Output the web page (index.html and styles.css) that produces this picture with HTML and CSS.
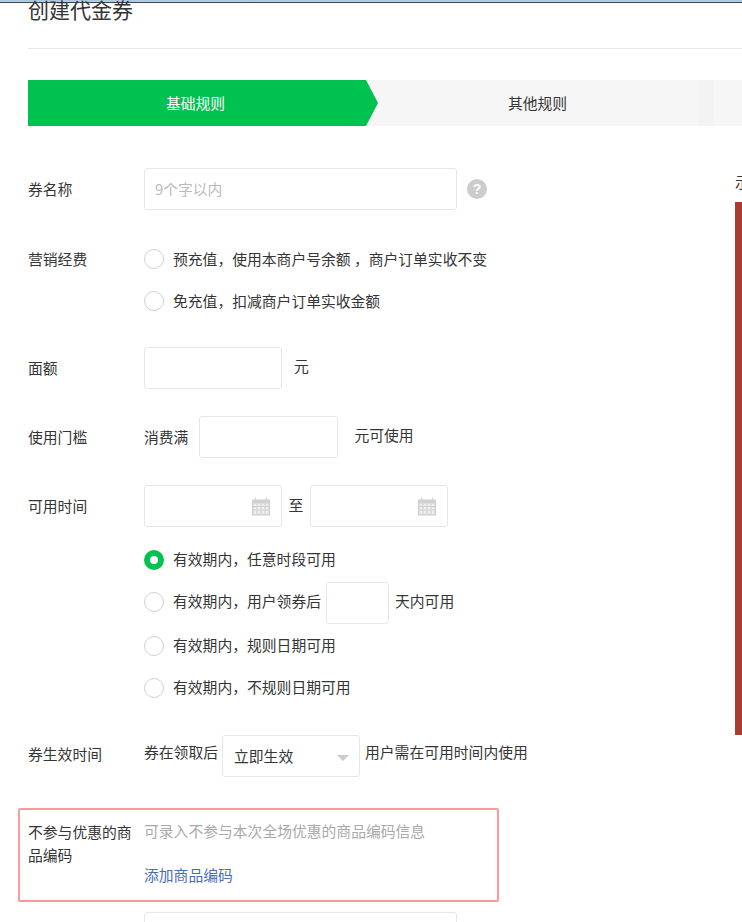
FILE: index.html
```html
<!DOCTYPE html>
<html lang="zh-CN">
<head>
<meta charset="utf-8">
<title>创建代金券</title>
<link rel="stylesheet" href="styles.css">
</head>
<body>
<div class="browser-strip"></div>
<div class="page">
  <main class="main">
    <h1 class="title">创建代金券</h1>
    <div class="steps">
      <div class="step step-active">基础规则</div>
      <div class="step step-next">其他规则</div>
      <div class="step-rest"></div>
    </div>
    <div class="content">
      <form class="form">
        <div class="row row-name">
          <div class="label">券名称</div>
          <div class="field"><input class="input input-wide" placeholder="9个字以内">
            <span class="help">?</span></div>
        </div>
        <div class="row row-budget">
          <div class="label">营销经费</div>
          <div class="stack">
            <label class="radio-row"><span class="radio"></span>预充值，使用本商户号余额 ，商户订单实收不变</label>
            <label class="radio-row"><span class="radio"></span>免充值，扣减商户订单实收金额</label>
          </div>
        </div>
        <div class="row row-face">
          <div class="label">面额</div>
          <div class="field"><input class="input input-mid"><span class="unit">元</span></div>
        </div>
        <div class="row row-gap">
          <div class="label">使用门槛</div>
          <div class="field"><span class="prefix">消费满</span><input class="input input-threshold"><span class="unit-far">元可使用</span></div>
        </div>
        <div class="row row-gap row-top">
          <div class="label label-date">可用时间</div>
          <div class="stack">
            <div class="field">
              <div class="date">
                <svg class="cal" viewBox="0 0 18 18"><path d="M0 2h3V0h1v2h10V0h1v2h3v16H0z" fill="#d0d0d0"/><path d="M1.500 6h3v2.500h-3zM5.500 6h3v2.500h-3zM9.500 6h3v2.500h-3zM13.500 6h3v2.500h-3zM1.500 9.500h3V12h-3zM5.500 9.500h3V12h-3zM9.500 9.500h3V12h-3zM13.500 9.500h3V12h-3zM1.500 13h3v3.500h-3zM5.500 13h3v3.500h-3zM9.500 13h3v3.500h-3zM13.500 13h3v3.500h-3z" fill="#eee"/></svg>
              </div>
              <span class="to">至</span>
              <div class="date">
                <svg class="cal" viewBox="0 0 18 18"><path d="M0 2h3V0h1v2h10V0h1v2h3v16H0z" fill="#d0d0d0"/><path d="M1.500 6h3v2.500h-3zM5.500 6h3v2.500h-3zM9.500 6h3v2.500h-3zM13.500 6h3v2.500h-3zM1.500 9.500h3V12h-3zM5.500 9.500h3V12h-3zM9.500 9.500h3V12h-3zM13.500 9.500h3V12h-3zM1.500 13h3v3.500h-3zM5.500 13h3v3.500h-3zM9.500 13h3v3.500h-3zM13.500 13h3v3.500h-3z" fill="#eee"/></svg>
              </div>
            </div>
            <div class="period">
              <label class="radio-row"><span class="radio radio-on"></span>有效期内，任意时段可用</label>
              <label class="radio-row radio-row-days"><span class="radio"></span>有效期内，用户领券后<input class="input input-days"><span class="days-text">天内可用</span></label>
              <label class="radio-row radio-row-rule"><span class="radio"></span>有效期内，规则日期可用</label>
              <label class="radio-row"><span class="radio"></span>有效期内，不规则日期可用</label>
            </div>
          </div>
        </div>
        <div class="row row-effect">
          <div class="label">券生效时间</div>
          <div class="field">券在领取后
            <div class="select">立即生效<span class="caret"></span></div>
            <span class="after-select">用户需在可用时间内使用</span>
          </div>
        </div>
        <div class="highlight">
          <div class="label label-multi">不参与优惠的商品编码</div>
          <div class="hl-body">
            <p class="hint">可录入不参与本次全场优惠的商品编码信息</p>
            <a class="link" href="#">添加商品编码</a>
          </div>
        </div>
        <div class="row row-last">
          <div class="label"></div>
          <input class="input input-wide">
        </div>
      </form>
      <aside class="preview">
        <div class="preview-title">示例</div>
        <div class="preview-panel"></div>
      </aside>
    </div>
  </main>
</div>
</body>
</html>
```
FILE: styles.css
```css
* { box-sizing: border-box; }
html, body { margin: 0; height: 922px; overflow: hidden; background: #fff; }
body { font-family: "Noto Sans CJK SC", "Noto Sans", sans-serif; font-size: 14.8px; color: #353535; }
.browser-strip { height: 3px; background: linear-gradient(#a9c4de, #b9cfe4 60%, #3c4650 60%, #3c4650); }
.page { padding-left: 28px; width: 1100px; }
.main { width: 1072px; }
.title { margin: -9px 0 0; height: 55px; border-bottom: 1px solid #e7e7eb; font-size: 21px; font-weight: 400; line-height: 30px; color: #353535; }
.steps { display: flex; height: 46px; margin-top: 31px; background: #f6f6f6; }
.step { display: flex; align-items: center; justify-content: center; line-height: 46px; }
.step-active { width: 350px; padding-right: 15px; color: #fff; background: #00c250; clip-path: polygon(0 0, 338px 0, 350px 23px, 338px 46px, 0 46px); }
.step-next { width: 320px; padding-right: 1px; }
.step-rest { width: 15px; background: #f3f3f3; }
.content { display: flex; }
.form { width: 707px; flex: none; padding-top: 42px; }
.row { display: flex; align-items: center; }
.row-top { align-items: flex-start; }
.label { width: 116px; flex: none; margin-top: -2px; }
.label-date { line-height: 42px; margin-top: 0; }
.prefix { margin-top: -2px; }
.field { display: flex; align-items: center; height: 42px; }
.stack { display: flex; flex-direction: column; }
.input { display: block; height: 42px; border: 1px solid #e7e7eb; border-radius: 3px; background: #fff; padding: 0 10px 2px; font: inherit; outline: none; }
.input::placeholder { color: #bbb; opacity: 1; }
.input-wide { width: 313px; }
.input-mid { width: 138px; }
.input-threshold { width: 139px; margin-left: 11px; }
.input-days { width: 63px; margin-left: 5px; margin-top: 6px; }
.days-text { margin-left: 6px; }
.help { width: 20px; height: 20px; margin-left: 10px; border-radius: 50%; background: #ccc; color: #fff; font: 700 14px/20px "Liberation Sans", sans-serif; text-align: center; }
.row-budget { margin-top: 28px; align-items: flex-start; }
.row-budget .label { line-height: 42px; margin-top: 0; }
.radio-row { display: flex; align-items: center; height: 42px; padding-bottom: 2px; }
.radio { width: 20px; height: 20px; margin-top: 2px; margin-right: 9px; border: 1.500px solid #d0d0d0; border-radius: 50%; background: #fff; flex: none; }
.radio-on { border: 6.500px solid #00c250; }
.period .radio-row { padding-bottom: 4px; }
.period .radio { margin-top: 4px; }
.period .radio-row-days { margin-top: 1px; padding-bottom: 6px; }
.radio-row-rule { margin-top: 1px; }
.row-face { margin-top: 25px; }
.unit { margin-left: 12px; margin-top: -5px; }
.unit-far { margin-left: 16px; margin-top: -5px; }
.row-gap { margin-top: 27px; }
.date { position: relative; width: 138px; height: 42px; border: 1px solid #e7e7eb; border-radius: 3px; }
.cal { position: absolute; top: 11px; right: 11px; width: 18px; height: 19px; }
.to { width: 28px; text-align: center; margin-top: -3px; }
.period { margin-top: 12px; }
.row-effect { margin-top: 26px; }
.row-effect .label { margin-top: -5px; }
.select { position: relative; width: 138px; height: 42px; margin-left: 4px; padding-left: 11px; border: 1px solid #e7e7eb; border-radius: 3px; line-height: 40px; }
.caret { position: absolute; top: 19px; right: 10px; border-style: solid; border-width: 6px 6px 0; border-color: #ccc transparent transparent; }
.row-effect .field { align-items: flex-start; line-height: 34px; }
.after-select { margin-left: 5px; }
.highlight { display: flex; width: 481px; height: 94px; margin: 31px 0 0 -10px; padding: 11px 8px 0; border: 2px solid #f99; border-radius: 2px; }
.label-multi { line-height: 22.500px; width: 116px; padding-right: 10px; margin-top: 0; }
.hl-body { display: flex; flex-direction: column; margin-top: -2px; }
.hint { margin: 0; color: #a9a9a9; line-height: 23px; }
.link { margin-top: 21px; color: #4a6bb8; text-decoration: none; line-height: 23px; }
.row-last { margin-top: 10px; align-items: flex-start; }
.preview { width: 320px; flex: none; padding-top: 46px; }
.preview-title { height: 30px; line-height: 20px; }
.preview-panel { height: 533px; background: #ab3c34; }
```
